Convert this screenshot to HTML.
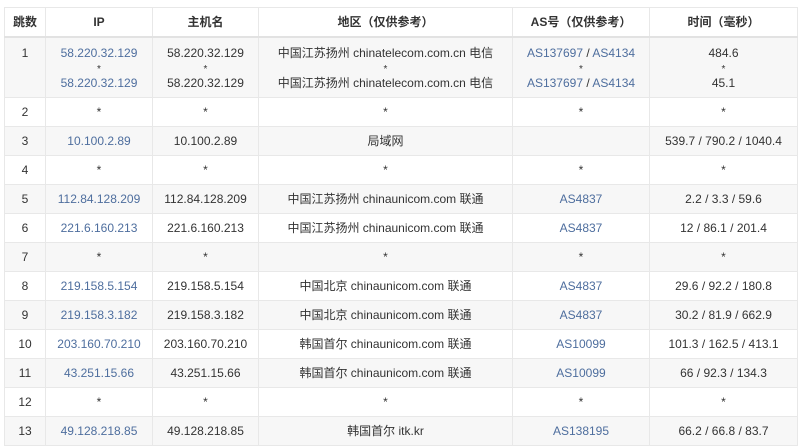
<!DOCTYPE html>
<html><head><meta charset="utf-8"><style>
body{margin:0;width:800px;height:448px;background:#fff;overflow:hidden;font-family:"Liberation Sans","Noto Sans CJK SC",sans-serif;font-size:12px;color:#333}
table{position:absolute;left:4px;top:7px;width:793px;border-collapse:collapse;table-layout:fixed}
td,th{border:1px solid #e8e8e8;text-align:center;padding:0;line-height:15px}
th{height:28px;font-weight:bold;color:#333;border-bottom:2px solid #e2e2e2}
td{height:28px}
tr.g td{background:#f7f7f7}
a{color:#4e6e9e;text-decoration:none}
.s{font-size:10px;line-height:18px;height:15px;display:block}
td.v1{height:51px;vertical-align:top;padding-top:8px;padding-bottom:0}
</style></head><body>
<table>
<colgroup><col style="width:41px"><col style="width:107px"><col style="width:106px"><col style="width:254px"><col style="width:137px"><col style="width:148px"></colgroup>
<tr><th>跳数</th><th>IP</th><th>主机名</th><th>地区（仅供参考）</th><th>AS号（仅供参考）</th><th>时间（毫秒）</th></tr>
<tr class="g"><td class="v1">1</td><td class="v1"><a>58.220.32.129</a><span class="s">*</span><a>58.220.32.129</a></td><td class="v1">58.220.32.129<span class="s">*</span>58.220.32.129</td><td class="v1">中国江苏扬州 chinatelecom.com.cn 电信<span class="s">*</span>中国江苏扬州 chinatelecom.com.cn 电信</td><td class="v1"><a>AS137697</a> / <a>AS4134</a><span class="s">*</span><a>AS137697</a> / <a>AS4134</a></td><td class="v1">484.6<span class="s">*</span>45.1</td></tr>
<tr><td>2</td><td>*</td><td>*</td><td>*</td><td>*</td><td>*</td></tr>
<tr class="g"><td>3</td><td><a>10.100.2.89</a></td><td>10.100.2.89</td><td>局域网</td><td></td><td>539.7 / 790.2 / 1040.4</td></tr>
<tr><td>4</td><td>*</td><td>*</td><td>*</td><td>*</td><td>*</td></tr>
<tr class="g"><td>5</td><td><a>112.84.128.209</a></td><td>112.84.128.209</td><td>中国江苏扬州 chinaunicom.com 联通</td><td><a>AS4837</a></td><td>2.2 / 3.3 / 59.6</td></tr>
<tr><td>6</td><td><a>221.6.160.213</a></td><td>221.6.160.213</td><td>中国江苏扬州 chinaunicom.com 联通</td><td><a>AS4837</a></td><td>12 / 86.1 / 201.4</td></tr>
<tr class="g"><td>7</td><td>*</td><td>*</td><td>*</td><td>*</td><td>*</td></tr>
<tr><td>8</td><td><a>219.158.5.154</a></td><td>219.158.5.154</td><td>中国北京 chinaunicom.com 联通</td><td><a>AS4837</a></td><td>29.6 / 92.2 / 180.8</td></tr>
<tr class="g"><td>9</td><td><a>219.158.3.182</a></td><td>219.158.3.182</td><td>中国北京 chinaunicom.com 联通</td><td><a>AS4837</a></td><td>30.2 / 81.9 / 662.9</td></tr>
<tr><td>10</td><td><a>203.160.70.210</a></td><td>203.160.70.210</td><td>韩国首尔 chinaunicom.com 联通</td><td><a>AS10099</a></td><td>101.3 / 162.5 / 413.1</td></tr>
<tr class="g"><td>11</td><td><a>43.251.15.66</a></td><td>43.251.15.66</td><td>韩国首尔 chinaunicom.com 联通</td><td><a>AS10099</a></td><td>66 / 92.3 / 134.3</td></tr>
<tr><td>12</td><td>*</td><td>*</td><td>*</td><td>*</td><td>*</td></tr>
<tr class="g"><td>13</td><td><a>49.128.218.85</a></td><td>49.128.218.85</td><td>韩国首尔 itk.kr</td><td><a>AS138195</a></td><td>66.2 / 66.8 / 83.7</td></tr>
</table>
</body></html>
